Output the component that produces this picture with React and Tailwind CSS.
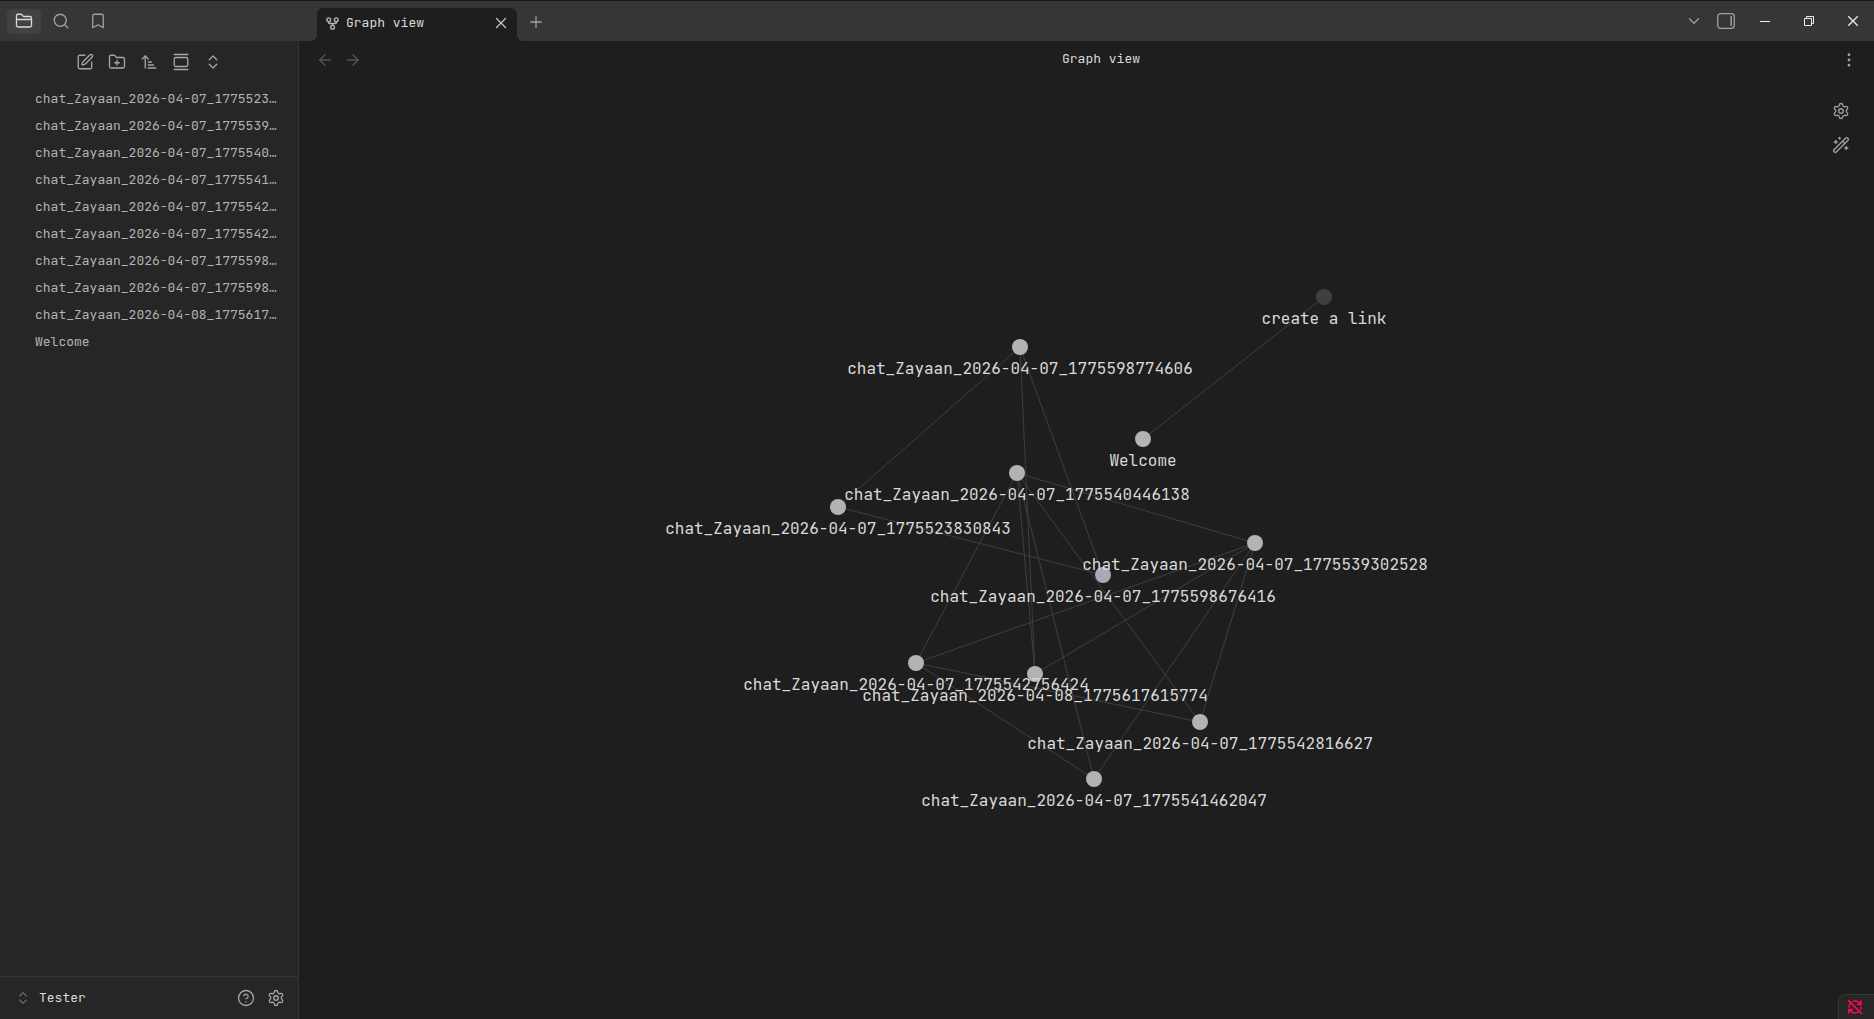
import {
  ArrowLeft,
  ArrowRight,
  ArrowUpNarrowWide,
  Bookmark,
  ChevronDown,
  ChevronsUpDown,
  CircleHelp,
  EllipsisVertical,
  FolderClosed,
  FolderPlus,
  GalleryVertical,
  GitFork,
  Plus,
  RefreshCwOff,
  Search,
  Settings,
  SquarePen,
  WandSparkles,
  X,
} from "lucide-react";

const files = [
  "chat_Zayaan_2026-04-07_1775523830843",
  "chat_Zayaan_2026-04-07_1775539302528",
  "chat_Zayaan_2026-04-07_1775540446138",
  "chat_Zayaan_2026-04-07_1775541462047",
  "chat_Zayaan_2026-04-07_1775542756424",
  "chat_Zayaan_2026-04-07_1775542816627",
  "chat_Zayaan_2026-04-07_1775598676416",
  "chat_Zayaan_2026-04-07_1775598774606",
  "chat_Zayaan_2026-04-08_1775617615774",
  "Welcome",
];

const nodes = {
  link: { x: 1025, y: 220, label: "create a link", fill: "#3f3f3f" },
  a: { x: 721, y: 270, label: files[7] },
  welcome: { x: 844, y: 362, label: "Welcome" },
  b: { x: 718, y: 396, label: files[2] },
  c: { x: 539, y: 430, label: files[0] },
  d: { x: 956, y: 466, label: files[1] },
  e: { x: 804, y: 498, label: files[6], fill: "#aaa7b6" },
  f: { x: 617, y: 586, label: files[4] },
  g: { x: 736, y: 597, label: files[8] },
  h: { x: 901, y: 645, label: files[5] },
  i: { x: 795, y: 702, label: files[3] },
};

const edges = [
  ["a", "c"], ["a", "g"], ["a", "e"], ["b", "d"], ["b", "f"], ["b", "g"],
  ["b", "h"], ["b", "i"], ["c", "e"], ["d", "f"], ["d", "g"], ["d", "h"],
  ["d", "i"], ["f", "h"], ["f", "i"], ["welcome", "link"],
];

function IconButton({ icon: Icon, label, size = 18, stroke = 1.75, className = "" }) {
  return (
    <button type="button" aria-label={label} className={`flex items-center justify-center ${className}`}>
      <Icon size={size} strokeWidth={stroke} />
    </button>
  );
}

function SidebarToggleIcon() {
  return (
    <svg width="18" height="18" viewBox="0 0 18 18" fill="none" stroke="currentColor">
      <rect x="0.7" y="1.7" width="16.6" height="14.6" rx="3" strokeWidth="1.3" />
      <path d="M14.2 4v10" strokeWidth="1.5" />
    </svg>
  );
}

function MinimizeIcon() {
  return (
    <svg width="10" height="10" viewBox="0 0 10 10" fill="none" stroke="currentColor">
      <path d="M0 5.5h10" />
    </svg>
  );
}

function RestoreIcon() {
  return (
    <svg width="10" height="10" viewBox="0 0 10 10" fill="none" stroke="currentColor">
      <path d="M0.5 2.5h7v7h-7zM2.5 2.5v-2h7v7h-2" />
    </svg>
  );
}

function CloseIcon() {
  return (
    <svg width="10" height="10" viewBox="0 0 10 10" fill="none" stroke="currentColor" strokeWidth="1.3">
      <path d="M0.3 0.3l9.4 9.4M9.7 0.3L0.3 9.7" />
    </svg>
  );
}

function TitleBar() {
  return (
    <header className="flex h-[41px] shrink-0 items-end border-t border-[#14142a] bg-[#363636] text-[#a0a0a0]">
      <div className="flex w-[299px] shrink-0 items-center gap-[3px] self-center px-[7px]">
        <IconButton icon={FolderClosed} label="Files" className="h-[25px] w-[34px] rounded-[5px] bg-[#424242] text-[#dadada]" />
        <IconButton icon={Search} label="Search" className="h-[25px] w-[34px]" />
        <IconButton icon={Bookmark} label="Bookmarks" className="h-[25px] w-[34px]" />
      </div>
      <div className="ml-3 flex items-end">
        <span className="size-[6px] bg-[radial-gradient(circle_at_0_0,#363636_6px,#1e1e1e_6px)]" />
        <div className="flex h-[33px] w-[200px] items-center rounded-t-[6px] bg-[#1e1e1e] pr-[7px] pb-[3px] pl-2 text-[#dadada]">
          <GitFork size={15} strokeWidth={2.25} className="text-[#b3b3b3]" />
          <span className="ml-[6px] grow">Graph view</span>
          <IconButton icon={X} label="Close tab" className="text-[#c4c4c4]" />
        </div>
        <span className="size-[6px] bg-[radial-gradient(circle_at_100%_0,#363636_6px,#1e1e1e_6px)]" />
      </div>
      <IconButton icon={Plus} label="New tab" className="ml-1 self-center pt-[2px]" />
      <div className="ml-auto flex items-center self-center">
        <IconButton icon={ChevronDown} label="Tab list" className="mr-[14px]" />
        <button type="button" aria-label="Toggle right sidebar">
          <SidebarToggleIcon />
        </button>
        <div className="ml-2 flex text-[#ececec]">
          <button type="button" aria-label="Minimize" className="flex h-8 w-11 items-center justify-center">
            <MinimizeIcon />
          </button>
          <button type="button" aria-label="Restore" className="flex h-8 w-11 items-center justify-center">
            <RestoreIcon />
          </button>
          <button type="button" aria-label="Close" className="flex h-8 w-[43px] items-center justify-center">
            <CloseIcon />
          </button>
        </div>
      </div>
    </header>
  );
}

function Sidebar() {
  return (
    <aside className="flex w-[299px] shrink-0 flex-col border-r border-[#363636] bg-[#262626] text-[#a6a6a6]">
      <div className="flex h-[42px] items-center justify-center gap-[14px]">
        <IconButton icon={SquarePen} label="New note" />
        <IconButton icon={FolderPlus} label="New folder" />
        <IconButton icon={ArrowUpNarrowWide} label="Change sort order" />
        <IconButton icon={GalleryVertical} label="Auto-reveal current file" />
        <IconButton icon={ChevronsUpDown} label="Expand all" />
      </div>
      <nav className="grow pt-[2px] pr-5 pl-[35px]">
        {files.map((name) => (
          <a key={name} href="#" className="block h-[27px] truncate leading-[27px] text-[#b3b3b3]">
            {name}
          </a>
        ))}
      </nav>
      <footer className="flex h-[43px] items-center border-t border-[#363636] pr-[13px] pl-[15px]">
        <button type="button" className="flex grow items-center gap-2 text-[#dadada]">
          <ChevronsUpDown size={16} strokeWidth={1.75} className="text-[#6c6c6c]" />
          Tester
        </button>
        <IconButton icon={CircleHelp} label="Help" className="mr-3" />
        <IconButton icon={Settings} label="Settings" />
      </footer>
    </aside>
  );
}

function Graph() {
  return (
    <svg viewBox="0 0 1575 942" className="h-full w-full" role="img" aria-label="Graph of linked notes">
      <g stroke="#3f3f3f">
        {edges.map(([from, to]) => (
          <line key={from + to} x1={nodes[from].x} y1={nodes[from].y} x2={nodes[to].x} y2={nodes[to].y} />
        ))}
      </g>
      {Object.entries(nodes).map(([id, node]) => (
        <circle key={id} cx={node.x} cy={node.y} r="8" fill={node.fill ?? "#b3b3b3"} />
      ))}
      <g fill="#dadada" fontSize="16" textAnchor="middle">
        {Object.entries(nodes).map(([id, node]) => (
          <text key={id} x={node.x} y={node.y + 27}>
            {node.label}
          </text>
        ))}
      </g>
    </svg>
  );
}

export default function App() {
  return (
    <div className="flex h-screen flex-col overflow-hidden bg-[#1e1e1e] font-['JetBrains_Mono','DejaVu_Sans_Mono',monospace] text-[13px]">
      <TitleBar />
      <div className="flex min-h-0 grow">
        <Sidebar />
        <main className="flex min-w-0 grow flex-col">
          <div className="flex h-9 shrink-0 items-center pr-4 pl-[17px]">
            <div className="flex flex-1 gap-[10px] pt-[2px] text-[#555555]">
              <IconButton icon={ArrowLeft} label="Back" />
              <IconButton icon={ArrowRight} label="Forward" />
            </div>
            <h1 className="pl-7 text-[#dadada]">Graph view</h1>
            <div className="flex flex-1 justify-end pt-[2px] text-[#a0a0a0]">
              <IconButton icon={EllipsisVertical} label="More options" />
            </div>
          </div>
          <div className="relative min-h-0 grow">
            <Graph />
            <div className="absolute top-[25px] right-6 flex flex-col gap-4 text-[#a0a0a0]">
              <IconButton icon={Settings} label="Graph settings" />
              <IconButton icon={WandSparkles} label="Animate" />
            </div>
            <div className="absolute right-0 bottom-0 flex h-[25px] w-9 items-center justify-center rounded-tl-[8px] border-t border-l border-[#363636] bg-[#262626] pr-[3px] text-[#fb0a45]">
              <IconButton icon={RefreshCwOff} label="Sync disconnected" size={16} stroke={2.5} />
            </div>
          </div>
        </main>
      </div>
    </div>
  );
}
